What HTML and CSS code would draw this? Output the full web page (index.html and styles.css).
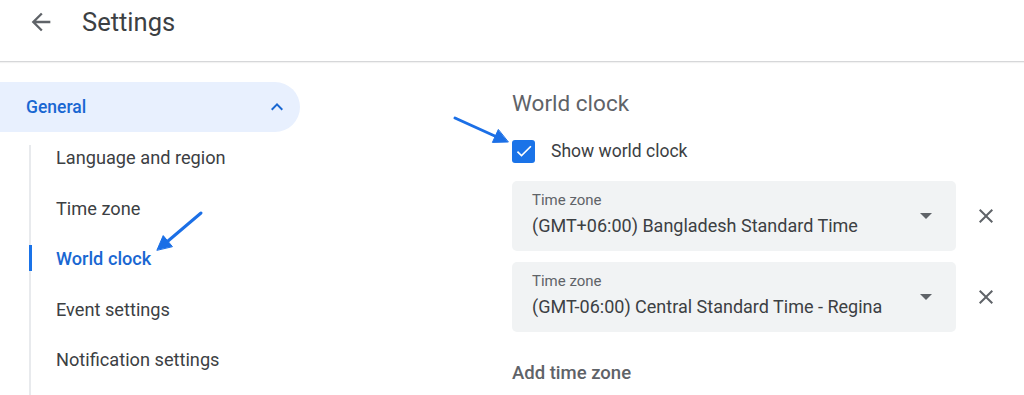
FILE: index.html
```html
<!DOCTYPE html>
<html lang="en">
<head>
    <meta charset="UTF-8">
    <meta name="viewport" content="width=device-width, initial-scale=1.0">
    <title>Settings</title>
    <link rel="stylesheet" href="styles.css">
</head>
<body>
    <header class="topbar">
        <span class="back">
            <svg viewBox="0 0 24 24" width="28" height="28"><path d="M20 11H7.83l5.59-5.59L12 4l-8 8 8 8 1.41-1.41L7.83 13H20v-2z"/></svg>
        </span>
        <h1 class="title">Settings</h1>
    </header>

    <main class="layout">
        <nav class="sidenav">
            <div class="group">
                <span>General</span>
                <svg viewBox="0 0 24 24" width="24" height="24"><path d="M7.41 15.41 12 10.83l4.59 4.58L18 14l-6-6-6 6z"/></svg>
            </div>
            <ul class="sublist">
                <li>Language and region</li>
                <li>Time zone</li>
                <li class="active">World clock</li>
                <li>Event settings</li>
                <li>Notification settings</li>
            </ul>
        </nav>

        <section class="content">
            <h2 class="heading">World clock</h2>
            <label class="check-row">
                <span class="checkbox">
                    <svg viewBox="0 0 24 24" width="20" height="20"><path d="M9 16.17 4.83 12l-1.42 1.41L9 19 21 7l-1.41-1.41z"/></svg>
                </span>
                Show world clock
            </label>

            <div class="zone-row">
                <div class="select">
                    <div class="select-text">
                        <div class="select-label">Time zone</div>
                        <div class="select-value">(GMT+06:00) Bangladesh Standard Time</div>
                    </div>
                    <span class="caret"></span>
                </div>
                <svg class="close" viewBox="0 0 24 24" width="24" height="24"><path d="M19 6.41 17.59 5 12 10.59 6.41 5 5 6.41 10.59 12 5 17.59 6.41 19 12 13.41 17.59 19 19 17.59 13.41 12z"/></svg>
            </div>

            <div class="zone-row">
                <div class="select">
                    <div class="select-text">
                        <div class="select-label">Time zone</div>
                        <div class="select-value">(GMT-06:00) Central Standard Time - Regina</div>
                    </div>
                    <span class="caret"></span>
                </div>
                <svg class="close" viewBox="0 0 24 24" width="24" height="24"><path d="M19 6.41 17.59 5 12 10.59 6.41 5 5 6.41 10.59 12 5 17.59 6.41 19 12 13.41 17.59 19 19 17.59 13.41 12z"/></svg>
            </div>

            <div class="add-zone">Add time zone</div>
        </section>
    </main>

    <!-- annotation arrows drawn over the screenshot -->
    <svg class="notes" viewBox="0 0 1024 395" width="1024" height="395">
        <g stroke="#1b6fe6" stroke-width="3" stroke-linecap="round" fill="#1b6fe6">
            <line x1="455" y1="118" x2="497" y2="137"/>
            <polygon stroke-width="1" points="508,142 492.4,142.4 498.2,129.8"/>
            <line x1="201" y1="213" x2="168" y2="241"/>
            <polygon stroke-width="1" points="157,250 163.2,235.6 172.2,246.4"/>
        </g>
    </svg>
</body>
</html>
```

FILE: styles.css
```css
*{
    box-sizing: border-box;
    margin: 0;
    padding: 0;
}
body{
    font-family: Roboto, "Liberation Sans", sans-serif;
    color: #3c4043;
    background: #fff;
    width: 1024px;
    height: 395px;
    overflow: hidden;
    position: relative;
}
.topbar{
    display: flex;
    align-items: center;
    height: 62px;
    padding-bottom: 18px;
    border-bottom: 1px solid #d6d7d9;
    box-shadow: 0 1px 1px rgba(0,0,0,.05);
}
.back{
    width: 82px;
    padding-left: 27px;
    display: flex;
    align-items: center;
}
.back svg{
    fill: #5f6368;
}
.title{
    font-size: 25.5px;
    font-weight: 400;
    color: #3c4043;
}
.layout{
    display: grid;
    grid-template-columns: 300px 1fr;
}
.sidenav{
    padding-top: 20px;
}
.group{
    display: flex;
    align-items: center;
    justify-content: space-between;
    height: 50px;
    padding: 0 11px 0 26px;
    background: #e8f0fe;
    border-radius: 0 25px 25px 0;
    color: #1967d2;
    font-size: 17.5px;
    font-weight: 500;
}
.group svg{
    fill: #1967d2;
}
.sublist{
    list-style: none;
    padding-bottom: 20px;
    background: linear-gradient(#e8eaed, #e8eaed) no-repeat 29px 13px / 2px 100%;
}
.sublist li{
    height: 50.5px;
    line-height: 52px;
    padding-left: 56px;
    font-size: 18.2px;
}
.sublist li.active{
    color: #1967d2;
    font-weight: 500;
    background: linear-gradient(#1a73e8, #1a73e8) no-repeat 29px center / 3px 26px;
}
.content{
    padding: 27px 0 0 212px;
}
.heading{
    font-size: 22.5px;
    font-weight: 400;
    line-height: 28px;
    color: #5f6368;
}
.check-row{
    display: flex;
    align-items: center;
    gap: 16px;
    margin-top: 22px;
    height: 24px;
    font-size: 17.5px;
}
.checkbox{
    width: 23px;
    height: 23px;
    border-radius: 3px;
    background: #1a73e8;
    display: flex;
    align-items: center;
    justify-content: center;
}
.checkbox svg{
    fill: #fff;
}
.zone-row{
    display: flex;
    align-items: center;
    gap: 18px;
    margin-top: 18px;
}
.zone-row + .zone-row{
    margin-top: 11px;
}
.select{
    width: 444px;
    height: 70px;
    background: #f1f3f4;
    border-radius: 5px;
    display: flex;
    align-items: flex-start;
    justify-content: space-between;
    padding: 10px 24px 0 20px;
}
.select-label{
    font-size: 15px;
    line-height: 18px;
    color: #5f6368;
}
.select-value{
    font-size: 18px;
    line-height: 24px;
    margin-top: 5px;
}
.caret{
    align-self: center;
    margin-top: -10px;
    width: 0;
    height: 0;
    border-left: 6px solid transparent;
    border-right: 6px solid transparent;
    border-top: 6px solid #5f6368;
}
.close{
    fill: #5f6368;
}
.add-zone{
    margin-top: 29px;
    line-height: 24px;
    font-size: 18.5px;
    font-weight: 500;
    color: #5f6368;
}
.notes{
    position: absolute;
    top: 0;
    left: 0;
    pointer-events: none;
}
```
